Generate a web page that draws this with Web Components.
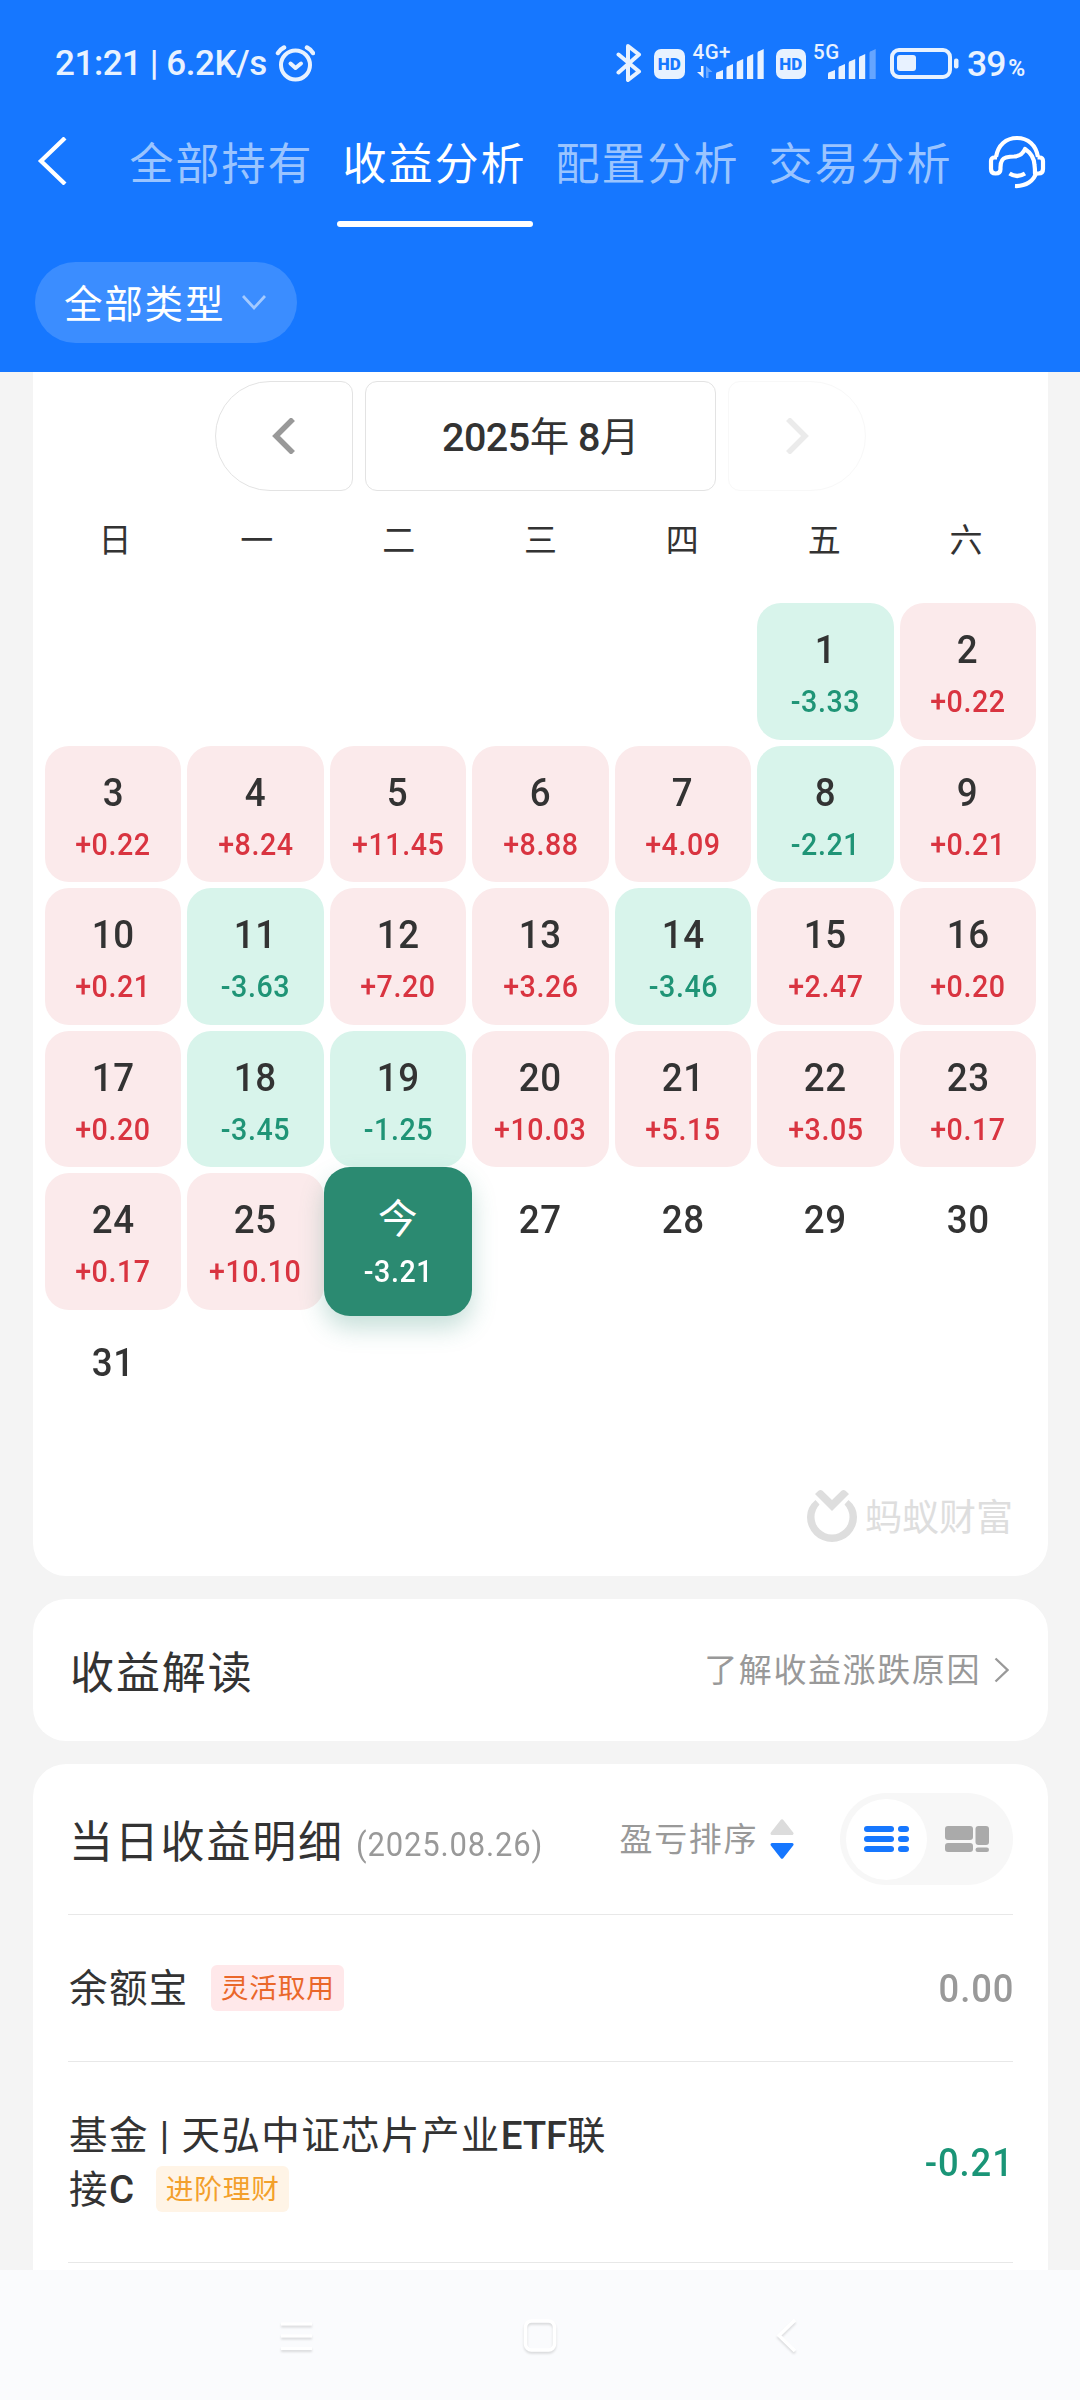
<!DOCTYPE html>
<html lang="zh-CN">
<head>
<meta charset="utf-8">
<title>收益分析</title>
<style>
html,body{margin:0;padding:0}
body{width:1080px;height:2400px;overflow:hidden;background:#f4f4f4;color:#333;font-family:Roboto,"Noto Sans CJK SC",sans-serif;-webkit-font-smoothing:antialiased}
</style>
</head>
<body>
<wealth-page>
  <status-bar slot="head"></status-bar>
  <tab-strip slot="head">
    <tab-item>全部持有</tab-item><tab-item active>收益分析</tab-item><tab-item>配置分析</tab-item><tab-item>交易分析</tab-item>
  </tab-strip>
  <filter-chip slot="head">全部类型</filter-chip>
  <month-card></month-card>
  <link-card>收益解读<span slot="more">了解收益涨跌原因</span></link-card>
  <detail-card>
    <span slot="title">当日收益明细</span><span slot="date">(2025.08.26)</span><span slot="sort">盈亏排序</span>
    <fund-row value="0.00" style="--h:146px;--shift:2px">余额宝<tag-label tone="hot">灵活取用</tag-label></fund-row>
    <fund-row value="-0.21" down style="--h:200px;--shift:2px"><span>基金 | 天弘中证芯片产业<latin-text>ETF</latin-text>联</span><br><span>接<latin-text>C</latin-text></span><tag-label tone="warm">进阶理财</tag-label></fund-row>
  </detail-card>
  <system-nav slot="foot"></system-nav>
</wealth-page>
<script>
function element(name, css, html){
  customElements.define(name, class extends HTMLElement{
    constructor(){
      super();
      const root=this.attachShadow({mode:'open'});
      root.innerHTML='<style>:host{display:block;box-sizing:border-box}*{box-sizing:border-box}svg{display:block;flex:none}'+css+'</style>'+(typeof html==='function'?html(this):html);
    }
  });
}

element('wealth-page',`
:host{width:1080px;height:2400px;display:flex;flex-direction:column;overflow:hidden;background:#f4f4f4}
header{height:372px;flex:none;background:#1677ff;color:#fff}
main{height:1898px;flex:none;overflow:hidden;display:flex;flex-direction:column;gap:23px;padding:0 32px 0 33px}
`,`<header><slot name="head"></slot></header><main><slot></slot></main><slot name="foot"></slot>`);

const bars=(dim)=>`<svg width="49" height="30" viewBox="0 0 49 30" fill="#e8f2ff">
<path d="M0 30v-5q0-2 2-2l5-2v9zM10.500 30V19q0-2 2-2l4.500-2v15zM20.700 30V14q0-2 2-2l4.500-2v20zM31 30V9q0-2 2-2l4.200-2v25z"/><path ${dim?'opacity=".38"':''} d="M41.500 30V4q0-2 2-2l4.200-2v30z"/></svg>`;
element('hd-badge',`:host{width:30.500px;height:30px;border-radius:7px;background:#e8f2ff;color:#1677ff;font:900 17px/30px Roboto,sans-serif;text-align:center;flex:none}`,`HD`);
element('signal-meter',`
:host{height:38px;display:flex;flex-direction:column;flex:none;position:relative}
.net{position:absolute;left:0;top:-3px;font:500 20.500px/24px Roboto,sans-serif;letter-spacing:.5px}
.row{display:flex;align-items:flex-end;height:36px;gap:3px;padding-left:var(--pad)}
.arrows{margin-bottom:1px}
`,h=>`<div class="net">${h.getAttribute('net')}</div><div class="row">${h.hasAttribute('data')?'<svg class="arrows" width="16" height="12" viewBox="0 0 16 12" fill="#e8f2ff"><path d="M4 0h2.500v12L0 6h4z"/><path opacity=".4" d="M9 12V0l6.500 6h-4v6z"/></svg>':''}${bars(h.hasAttribute('weak'))}</div>`);
element('status-bar',`
:host{height:86px;padding:43px 0 0 55px;display:flex;align-items:flex-start;color:#e8f2ff}
.time{width:220px;font:500 35px/42px Roboto,sans-serif;letter-spacing:-.45px;white-space:nowrap}
.right{display:flex;align-items:flex-start;margin-left:301px}
.pct{font:500 35.500px/42px Roboto,sans-serif;letter-spacing:-1px;white-space:nowrap}
.pct small{font-size:23px;margin-left:3px;font-weight:600}
`,`<div class="time">21:21 | 6.2K/s</div>
<svg width="40" height="40" viewBox="0 0 40 40" fill="none" stroke="#e8f2ff" stroke-width="4" stroke-linecap="round" stroke-linejoin="round"><circle cx="20.500" cy="22" r="14.500"/><path d="M15.500 20.500l5 4.500 5.500-4.500"/><path stroke-width="4.500" d="M3 10Q5 6.500 9 4.500M38 10Q36 6.500 32 4.500"/></svg>
<div class="right">
<svg width="26" height="40" viewBox="0 0 26 40" fill="none" stroke="#e8f2ff" stroke-width="4" stroke-linecap="round" stroke-linejoin="round"><path d="M2.500 11.500L23 28.500 12 37V3l11 8.500L2.500 29.500"/></svg>
<hd-badge style="margin:6px 0 0 12px"></hd-badge>
<signal-meter net="4G+" data style="margin-left:8px;--pad:4px"></signal-meter>
<hd-badge style="margin:6px 0 0 11px"></hd-badge>
<signal-meter net="5G" weak style="margin-left:7px;--pad:15px"></signal-meter>
<svg style="margin:5px 0 0 13px" width="69" height="31" viewBox="0 0 69 31" fill="#e8f2ff"><rect x="2" y="2" width="58" height="27" rx="7" fill="none" stroke="#e8f2ff" stroke-width="4"/><rect x="7" y="7" width="19" height="16" rx="3"/><rect x="64" y="10.500" width="4.500" height="10" rx="2"/></svg>
<div class="pct" style="margin-left:8px">39<small>%</small></div></div>`);

element('tab-item',`
:host{width:213px;height:104px;display:flex;flex-direction:column;align-items:center;color:#9ac4ff;font:400 44px/66px "Noto Sans CJK SC",sans-serif;letter-spacing:2px}
:host([active]){color:#fff}
span{height:93px;white-space:nowrap;flex:none}
i{display:none;width:196px;height:6px;border-radius:3px;background:#fff}
:host([active]) i{display:block}
`,`<span><slot></slot></span><i></i>`);
element('tab-strip',`
:host{height:176px;display:flex;padding-left:37px}
.back{margin-top:51px}
.tabs{display:flex;margin:42px 0 0 48px}
.help{margin:49px 0 0 21px}
`,`<svg class="back" width="30" height="48" viewBox="0 0 30 48" fill="none" stroke="#fff" stroke-width="4.300"><path d="M28 1L4 24 28 47"/></svg>
<div class="tabs"><slot></slot></div>
<svg class="help" width="58" height="54" viewBox="0 0 58 54" fill="none" stroke="#fff" stroke-width="4.200" stroke-linejoin="round"><path d="M8 22C10 10 18 3 29 3s19 7 21 19"/><path d="M6.500 22.500H9M6.500 22.500Q3 22.500 3 26V34Q3 38.500 7.500 38.500Q12.500 38.500 12.500 34Q12 24 18 22.500Q22 21.500 26 21.500Q34 21 37 14Q46 20 46.500 30Q47 33 47 38.500H50.500Q55 38.500 55 34V26Q55 22.500 51.500 22.500H49.500"/><path d="M21.500 38.500Q29 43.500 37 38.500"/><path d="M48.500 37C46 46 38 51.500 27 51"/></svg>`);

element('filter-chip',`
:host{display:flex;align-items:center;width:262px;height:81px;margin-left:35px;border-radius:41px;background:#3b8dff;padding-left:29px}
span{font:400 38.500px/58px "Noto Sans CJK SC",sans-serif;letter-spacing:1.800px;margin-top:-3px}
svg{margin-left:17px}
`,`<span><slot></slot></span><svg width="24" height="17" viewBox="0 0 24 17" fill="none" stroke="#a4caff" stroke-width="2.800"><path d="M1 2l11 12L23 2"/></svg>`);

element('month-picker',`
:host{display:flex;gap:12px;justify-content:center;height:110px}
div{border:1px solid #e3e3e3;display:flex;align-items:center;justify-content:center}
.p{width:138px;border-radius:55px 12px 12px 55px}
.m{width:351px;border-radius:12px;font:500 39.500px/56px Roboto,"Noto Sans CJK SC",sans-serif;letter-spacing:-.5px;white-space:pre;padding-top:3px}
.n{width:138px;border-radius:12px 55px 55px 12px;border-color:#f8f8f8}
`,`<div class="p"><svg width="24" height="36" viewBox="0 0 24 36" fill="none" stroke="#999" stroke-width="5.500"><path d="M21 1L4 18l17 17"/></svg></div>
<div class="m"><slot></slot></div>
<div class="n"><svg width="24" height="36" viewBox="0 0 24 36" fill="none" stroke="#ebebeb" stroke-width="5.500"><path d="M3 1l17 17L3 35"/></svg></div>`);

element('day-cell',`
:host{display:flex;flex-direction:column;align-items:center;border-radius:24px;padding-top:27px;font-family:Roboto,"Noto Sans CJK SC",sans-serif;font-weight:500}
:host([kind=up]){background:#fbeaeb;color:#d93440}
:host([kind=down]){background:#d8f4eb;color:#1f9476}
:host([kind=today]){background:#2b8a71;color:#fff;margin:-6.200px;padding-top:33.200px;border-radius:26px;box-shadow:0 12px 24px rgba(43,138,113,.27);position:relative}
.d{font-size:39.500px;line-height:40px;height:40px;color:#333;letter-spacing:.8px;transform:scaleX(.93)}
:host([kind=today]) .d{color:#fff;font-weight:400;transform:none}
.v{font-size:31.800px;line-height:40px;margin-top:11px;letter-spacing:.6px;white-space:nowrap;transform:scaleX(.9)}
`,h=>`<div class="d">${h.getAttribute('day')||''}</div><div class="v">${h.getAttribute('value')||''}</div>`);

const values=['-3.33','+0.22','+0.22','+8.24','+11.45','+8.88','+4.09','-2.21','+0.21','+0.21','-3.63','+7.20','+3.26','-3.46','+2.47','+0.20','+0.20','-3.45','-1.25','+10.03','+5.15','+3.05','+0.17','+0.17','+10.10','-3.21'];
const cells='<i></i>'.repeat(5)+Array.from({length:31},(_,i)=>{
  const v=values[i]||'', kind=i===25?'today':v[0]==='+'?'up':v?'down':'none';
  return `<day-cell day="${i===25?'今':i+1}" value="${v}" kind="${kind}"></day-cell>`;
}).join('');

element('brand-mark',`
:host{display:flex;align-items:flex-start;color:#dedede;font:400 37px/54px "Noto Sans CJK SC",sans-serif;white-space:nowrap}
span{margin-left:8px;margin-top:-2px;font-weight:400;letter-spacing:0}
`,`<svg width="50" height="52" viewBox="0 0 50 52" fill="#dedede"><path d="M8.500 10Q0 17 0 27a25 25 0 0 0 50 0Q50 17 41.500 10L37.500 14.500Q42.500 20 42.500 27a17.500 17.500 0 0 1-35 0Q7.500 20 12.500 14.500z"/><path d="M8 4L11.500.8Q13.500-.6 15.500.8L25 10 34.500.8Q36.500-.6 38.500.8L42 4 25 21z"/></svg><span><slot></slot></span>`);

element('month-card',`
:host{height:1204px;flex:none;background:#fff;border-radius:0 0 33px 33px;padding:9px 12px 0;display:flex;flex-direction:column}
.week{display:flex;height:98px;margin:0 -1px 0 -1px;font:400 33px/95px "Noto Sans CJK SC",sans-serif}
.week span{flex:1;text-align:center}
.grid{display:grid;grid-template-columns:repeat(7,1fr);grid-template-rows:repeat(6,136.500px);gap:6.100px 6.200px;margin-top:14px}
.brand{display:flex;justify-content:flex-end;margin-top:38px;padding-right:23px}
`,`<month-picker>2025<span style="font-weight:400">年</span> 8<span style="font-weight:400">月</span></month-picker>
<div class="week">${[...'日一二三四五六'].map(d=>`<span>${d}</span>`).join('')}</div>
<div class="grid">${cells}</div><div class="brand"><brand-mark>蚂蚁财富</brand-mark></div>`);

element('link-card',`
:host{height:142px;flex:none;background:#fff;border-radius:33px;display:flex;align-items:center;padding:0 39px 0 37px;font:400 44px/66px "Noto Sans CJK SC",sans-serif;letter-spacing:1.900px}
.t{flex:1;margin-top:-1px}
.r{font-size:33px;line-height:50px;letter-spacing:1.600px;color:#999;margin-right:13px;margin-top:-4px}
`,`<div class="t"><slot></slot></div><div class="r"><slot name="more"></slot></div><svg width="15" height="26" viewBox="0 0 15 26" fill="none" stroke="#999" stroke-width="2.300"><path d="M1.500 1.500L13.500 13l-12 11.500"/></svg>`);

element('view-switch',`
:host{width:173px;height:92px;border-radius:46px;background:#f7f7f7;display:flex;align-items:center;padding:6px}
.on{width:81px;height:81px;border-radius:50%;background:#fff;display:flex;align-items:center;justify-content:center;margin-right:18px}
`,`<div class="on"><svg width="45" height="26" viewBox="0 0 45 26" fill="#1677ff"><rect width="30" height="6" rx="3"/><rect y="10" width="30" height="6" rx="3"/><rect y="20" width="30" height="6" rx="3"/><rect x="34" width="11" height="6" rx="3"/><rect x="34" y="10" width="11" height="6" rx="3"/><rect x="34" y="20" width="11" height="6" rx="3"/></svg></div>
<svg width="44" height="26" viewBox="0 0 44 26" fill="#aaa"><rect width="28" height="14" rx="3"/><rect y="17" width="28" height="9" rx="3"/><rect x="30.500" width="13.500" height="19" rx="3"/><rect x="30.500" y="21.500" width="13.500" height="4.500" rx="2.200"/></svg>`);

element('detail-card',`
:host{height:560px;flex:none;background:#fff;border-radius:33px 33px 0 0;padding:0 35px}
.head{height:151px;border-bottom:1px solid #e8e8e8;display:flex;align-items:center}
.title{font:400 44px/66px "Noto Sans CJK SC",sans-serif;letter-spacing:1.800px;margin:0 0 0 1px}
.date{font:400 33.500px/44px Roboto,sans-serif;color:#999;letter-spacing:.9px;margin:12px 0 0 12px;flex:1}
.date div{transform:scaleX(.925);transform-origin:0 50%}
.sort{font:400 33px/50px "Noto Sans CJK SC",sans-serif;color:#999;letter-spacing:1.600px;margin:-4px 12px 0 0}
view-switch{margin-left:46px}
`,`<div class="head"><div class="title"><slot name="title"></slot></div><div class="date"><div><slot name="date"></slot></div></div><div class="sort"><slot name="sort"></slot></div>
<svg width="24" height="40" viewBox="0 0 24 40" stroke-width="3" stroke-linejoin="round"><path fill="#dcdcdc" stroke="#dcdcdc" d="M12 1.800L22 14.500H2z"/><path fill="#1677ff" stroke="#1677ff" d="M12 38.200L22 25.500H2z"/></svg><view-switch></view-switch></div><slot></slot>`);

element('latin-text',`:host{display:inline;font-weight:500;letter-spacing:-.2px}`,`<slot></slot>`);

element('tag-label',`
:host{display:inline-block;height:46px;border-radius:6px;padding:0 9px 0 10px;margin-left:22px;vertical-align:middle;font:400 27.700px/43px "Noto Sans CJK SC",sans-serif;letter-spacing:.8px;position:relative;top:-4px}
:host([tone=hot]){background:#ffe8ea;color:#ea672a}
:host([tone=warm]){background:#fff4e6;color:#f3a02c}
`,`<slot></slot>`);

element('fund-row',`
:host{height:calc(var(--h) + 1px);display:flex;align-items:center;justify-content:space-between;border-bottom:1px solid #e8e8e8}
.n{width:560px;font:400 38.500px/54px Roboto,"Noto Sans CJK SC",sans-serif;letter-spacing:1.400px;margin:var(--shift,0) 0 0 1px}
.v{font:500 39.500px/50px Roboto,sans-serif;color:#999;padding-top:2px;letter-spacing:1px;margin-right:-1px;transform:scaleX(.92);transform-origin:100% 50%}
:host([down]) .v{color:#1a9577}
`,h=>`<div class="n"><slot></slot></div><div class="v">${h.getAttribute('value')}</div>`);

element('system-nav',`
:host{height:130px;flex:none;background:#fafbfd;display:flex;align-items:center;padding:1px 0 0 281px}
svg{filter:drop-shadow(0 2px 1px rgba(0,0,0,.13));overflow:visible}
`,`<svg width="32" height="34" viewBox="0 0 32 34" stroke="#fff" stroke-width="3"><path d="M0 5h31M0 17h31M0 29.500h31"/></svg>
<svg style="margin-left:210px" width="34" height="34" viewBox="0 0 34 34" fill="none" stroke="#fff" stroke-width="3.500"><rect x="2.500" y="2" width="29" height="29" rx="6"/></svg>
<svg style="margin-left:220px" width="20" height="34" viewBox="0 0 20 34" fill="none" stroke="#fff" stroke-width="3.500"><path d="M18 1L2 16.500 18 32"/></svg>`);
</script>
</body>
</html>
